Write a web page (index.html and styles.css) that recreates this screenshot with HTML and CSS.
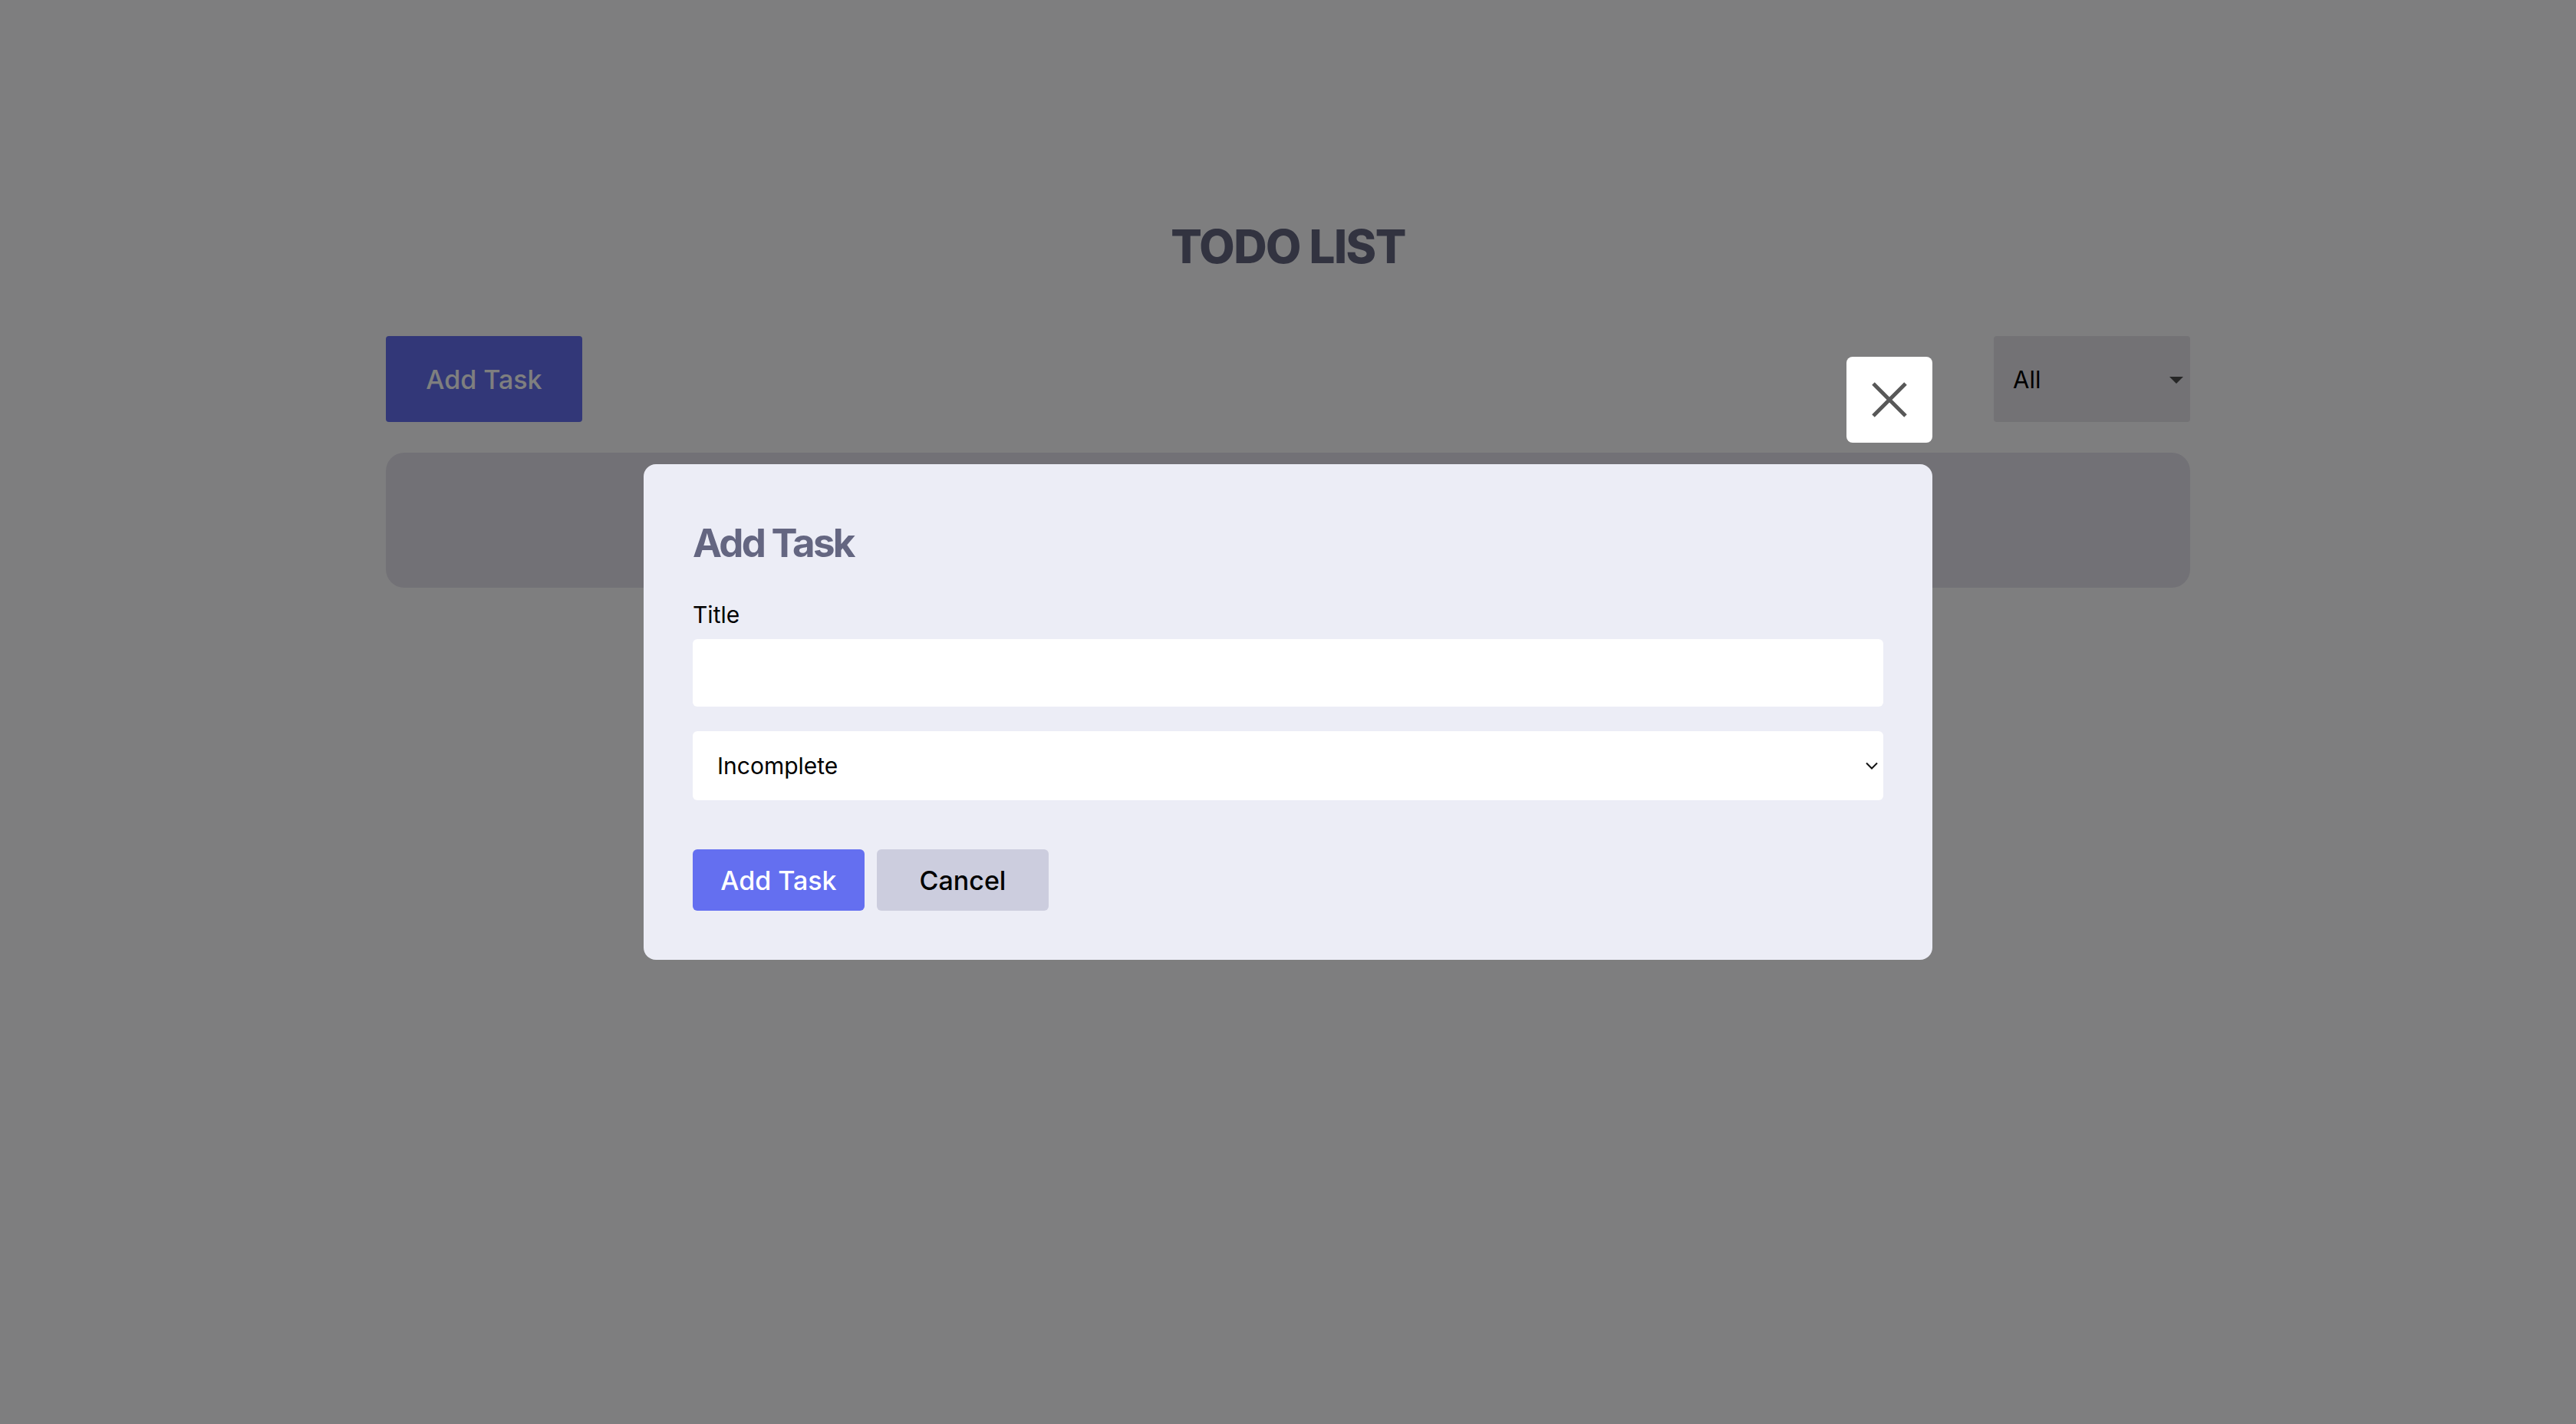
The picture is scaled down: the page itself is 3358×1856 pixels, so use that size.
FILE: index.html
```html
<!DOCTYPE html>
<html lang="en">
<head>
<meta charset="utf-8">
<title>Todo List</title>
<link rel="stylesheet" href="styles.css">
</head>
<body>
  <div class="app">
    <h1 class="title">TODO LIST</h1>
    <div class="app-header">
      <button class="btn btn-primary btn-lg" type="button">Add Task</button>
      <div class="filter">
        <select class="filter-select" aria-label="Filter">
          <option>All</option>
          <option>Incomplete</option>
          <option>Completed</option>
        </select>
        <svg class="filter-caret" viewBox="0 0 18 9" aria-hidden="true"><path d="M0 0H18L9 9Z"/></svg>
      </div>
    </div>
    <div class="todo-list"></div>
  </div>

  <div class="backdrop">
    <div class="modal">
      <button class="close-btn" type="button" aria-label="Close">
        <svg viewBox="0 0 46 46" aria-hidden="true"><path d="M2 2L44 44M44 2L2 44"/></svg>
      </button>
      <form class="form">
        <h2 class="form-title">Add Task</h2>
        <label class="field-label" for="title">Title</label>
        <input id="title" class="field-input" type="text">
        <div class="select-wrap">
          <select class="field-select" aria-label="Status">
            <option>Incomplete</option>
            <option>Completed</option>
          </select>
          <svg class="chevron" viewBox="0 0 16 10" aria-hidden="true"><path d="M1 1.5L8 8.5L15 1.5"/></svg>
        </div>
        <div class="actions">
          <button class="btn btn-primary btn-md" type="button">Add Task</button>
          <button class="btn btn-secondary btn-md" type="button">Cancel</button>
        </div>
      </form>
    </div>
  </div>
</body>
</html>
```

FILE: styles.css
```css
* {
  box-sizing: border-box;
}

body {
  margin: 0;
  background: #fdfdff;
  font-family: Inter, "Noto Sans", "Liberation Sans", sans-serif;
  color: #000;
}

.app {
  width: 2352px;
  margin: 0 auto;
  padding-top: 285px;
}

.title {
  margin: 0 0 81px;
  font-size: 60px;
  line-height: 72px;
  font-weight: 800;
  letter-spacing: -1.5px;
  text-align: center;
  color: #646681;
}

.app-header {
  display: flex;
  justify-content: space-between;
  align-items: center;
  height: 112px;
}

.btn {
  border: none;
  font-family: Inter, "Noto Sans", sans-serif;
  font-weight: 500;
  cursor: pointer;
  display: inline-flex;
  align-items: center;
  justify-content: center;
}

.btn-primary {
  background: #646ff0;
  color: #fff;
}

.btn-secondary {
  background: #cccdde;
  color: #000;
}

.btn-lg {
  width: 256px;
  height: 112px;
  font-size: 34px;
  border-radius: 4px;
}

.btn-md {
  width: 224px;
  height: 80px;
  font-size: 34px;
  border-radius: 6px;
}

.filter {
  position: relative;
  width: 256px;
  height: 112px;
}

.filter-select {
  appearance: none;
  -webkit-appearance: none;
  width: 100%;
  height: 100%;
  border: none;
  border-radius: 4px;
  background: #e6e4ea;
  padding: 0 0 0 25px;
  font-family: Inter, "Noto Sans", sans-serif;
  font-size: 31px;
  color: #000;
}

.filter-caret {
  position: absolute;
  right: 9px;
  top: 53px;
  width: 18px;
  height: 9px;
  fill: #4c4c4c;
  pointer-events: none;
}

.todo-list {
  margin-top: 40px;
  height: 176px;
  background: #e4e2ec;
  border-radius: 24px;
}

.backdrop {
  position: fixed;
  inset: 0;
  background: rgba(0, 0, 0, 0.5);
  display: flex;
  align-items: center;
  justify-content: center;
}

.modal {
  position: relative;
  width: 1680px;
  background: #ecedf6;
  border-radius: 16px;
  padding: 72px 64px 64px;
}

.close-btn {
  position: absolute;
  right: 0;
  bottom: calc(100% + 28px);
  width: 112px;
  height: 112px;
  border: none;
  border-radius: 8px;
  background: #fff;
  display: flex;
  align-items: center;
  justify-content: center;
  padding: 0;
}

.close-btn svg {
  width: 46px;
  height: 46px;
  stroke: #585858;
  stroke-width: 5;
  fill: none;
}

.form {
  display: flex;
  flex-direction: column;
}

.form-title {
  margin: 0;
  font-size: 51px;
  line-height: 62px;
  font-weight: 700;
  letter-spacing: -2.7px;
  color: #646681;
}

.field-label {
  margin-top: 44px;
  font-size: 30px;
  line-height: 36px;
}

.field-input {
  margin-top: 14px;
  width: 100%;
  height: 88px;
  border: none;
  border-radius: 6px;
  background: #fff;
  padding: 0 32px;
  font-family: Inter, "Noto Sans", sans-serif;
  font-size: 30px;
}

.select-wrap {
  position: relative;
  margin-top: 32px;
  height: 90px;
}

.field-select {
  appearance: none;
  -webkit-appearance: none;
  width: 100%;
  height: 100%;
  border: none;
  border-radius: 6px;
  background: #fff;
  padding: 0 0 0 32px;
  font-family: Inter, "Noto Sans", sans-serif;
  font-size: 30px;
  color: #000;
}

.chevron {
  position: absolute;
  right: 7px;
  top: 40px;
  width: 16px;
  height: 10px;
  fill: none;
  stroke: #111;
  stroke-width: 2;
  pointer-events: none;
}

.actions {
  display: flex;
  gap: 16px;
  margin-top: 64px;
}
```
